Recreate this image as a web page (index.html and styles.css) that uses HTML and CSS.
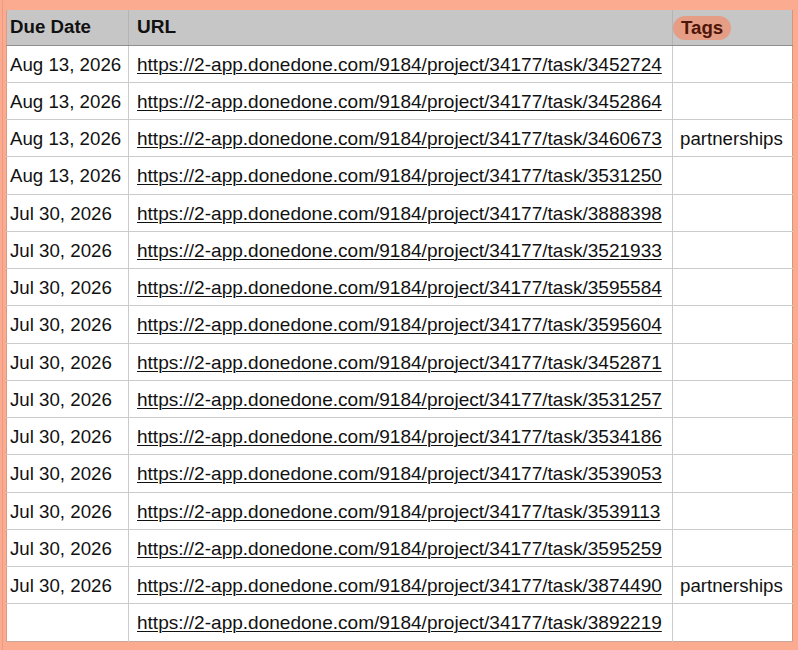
FILE: index.html
```html
<!DOCTYPE html>
<html>
<head>
<meta charset="utf-8">
<link rel="stylesheet" href="styles.css">
</head>
<body>
<div class="frame">
<table class="grid">
<colgroup><col class="w-date"><col class="w-url"><col class="w-tags"></colgroup>
<thead>
<tr><th class="c-date">Due Date</th><th class="c-url">URL</th><th class="c-tags"><span class="pill">Tags</span></th></tr>
</thead>
<tbody>
<tr><td class="c-date">Aug 13, 2026</td><td class="c-url"><a>https://2-app.donedone.com/9184/project/34177/task/3452724</a></td><td class="c-tags"></td></tr>
<tr><td class="c-date">Aug 13, 2026</td><td class="c-url"><a>https://2-app.donedone.com/9184/project/34177/task/3452864</a></td><td class="c-tags"></td></tr>
<tr><td class="c-date">Aug 13, 2026</td><td class="c-url"><a>https://2-app.donedone.com/9184/project/34177/task/3460673</a></td><td class="c-tags">partnerships</td></tr>
<tr><td class="c-date">Aug 13, 2026</td><td class="c-url"><a>https://2-app.donedone.com/9184/project/34177/task/3531250</a></td><td class="c-tags"></td></tr>
<tr><td class="c-date">Jul 30, 2026</td><td class="c-url"><a>https://2-app.donedone.com/9184/project/34177/task/3888398</a></td><td class="c-tags"></td></tr>
<tr><td class="c-date">Jul 30, 2026</td><td class="c-url"><a>https://2-app.donedone.com/9184/project/34177/task/3521933</a></td><td class="c-tags"></td></tr>
<tr><td class="c-date">Jul 30, 2026</td><td class="c-url"><a>https://2-app.donedone.com/9184/project/34177/task/3595584</a></td><td class="c-tags"></td></tr>
<tr><td class="c-date">Jul 30, 2026</td><td class="c-url"><a>https://2-app.donedone.com/9184/project/34177/task/3595604</a></td><td class="c-tags"></td></tr>
<tr><td class="c-date">Jul 30, 2026</td><td class="c-url"><a>https://2-app.donedone.com/9184/project/34177/task/3452871</a></td><td class="c-tags"></td></tr>
<tr><td class="c-date">Jul 30, 2026</td><td class="c-url"><a>https://2-app.donedone.com/9184/project/34177/task/3531257</a></td><td class="c-tags"></td></tr>
<tr><td class="c-date">Jul 30, 2026</td><td class="c-url"><a>https://2-app.donedone.com/9184/project/34177/task/3534186</a></td><td class="c-tags"></td></tr>
<tr><td class="c-date">Jul 30, 2026</td><td class="c-url"><a>https://2-app.donedone.com/9184/project/34177/task/3539053</a></td><td class="c-tags"></td></tr>
<tr><td class="c-date">Jul 30, 2026</td><td class="c-url"><a>https://2-app.donedone.com/9184/project/34177/task/3539113</a></td><td class="c-tags"></td></tr>
<tr><td class="c-date">Jul 30, 2026</td><td class="c-url"><a>https://2-app.donedone.com/9184/project/34177/task/3595259</a></td><td class="c-tags"></td></tr>
<tr><td class="c-date">Jul 30, 2026</td><td class="c-url"><a>https://2-app.donedone.com/9184/project/34177/task/3874490</a></td><td class="c-tags">partnerships</td></tr>
<tr><td class="c-date"></td><td class="c-url"><a>https://2-app.donedone.com/9184/project/34177/task/3892219</a></td><td class="c-tags"></td></tr>
</tbody>
</table>
</div>
</body>
</html>
```
FILE: styles.css
```css
html, body {
  margin: 0;
  padding: 0;
  background: #fbab8f;
}
body {
  width: 798px;
  height: 650px;
  overflow: hidden;
  font-family: "Liberation Sans", Arial, sans-serif;
  color: #111;
}
.frame {
  margin-left: 2px;
  border-left: 1px solid #e99c82;
  padding: 10px 6px 9px 3px;
}
.grid {
  border-collapse: collapse;
  width: 786px;
  background: #fff;
  border-left: 1px solid #e29a82;
  border-bottom: 1px solid #c9a79a;
  border-right: 1px solid #d6957f;
  table-layout: fixed;
}
.w-date { width: 122px; }
.w-url { width: 544px; }
.w-tags { width: 120px; }
.grid th, .grid td {
  box-sizing: border-box;
  padding: 0 0 0 8px;
  text-align: left;
  white-space: nowrap;
  overflow: hidden;
  font-size: 18.7px;
}
.grid th {
  background: #c6c6c6;
  height: 35px;
  font-weight: bold;
  border-bottom: 1px solid #8f8f8f;
  border-right: 1px solid #b4b4b4;
  color: #111;
}
.grid td {
  height: 37.25px;
  padding-top: 2px;
  border-bottom: 1px solid #cbcbcb;
  border-right: 1px solid #cbcbcb;
}
.grid .c-date { padding-left: 3px; }
.grid .c-url { font-size: 19.05px; }
.grid .c-tags { padding-left: 7px; border-right: none; }
.grid tbody tr:last-child td { border-bottom: none; }
.grid a {
  color: #111;
  text-decoration: underline;
  text-underline-offset: 2px;
  text-decoration-thickness: 1px;
}
.pill {
  display: inline-block;
  background: #e59d85;
  color: #4e1608;
  border-radius: 13px;
  padding: 2px 8px 2px 8px;
  margin-left: -7px;
  margin-top: 1px;
  line-height: 20px;
}
```
